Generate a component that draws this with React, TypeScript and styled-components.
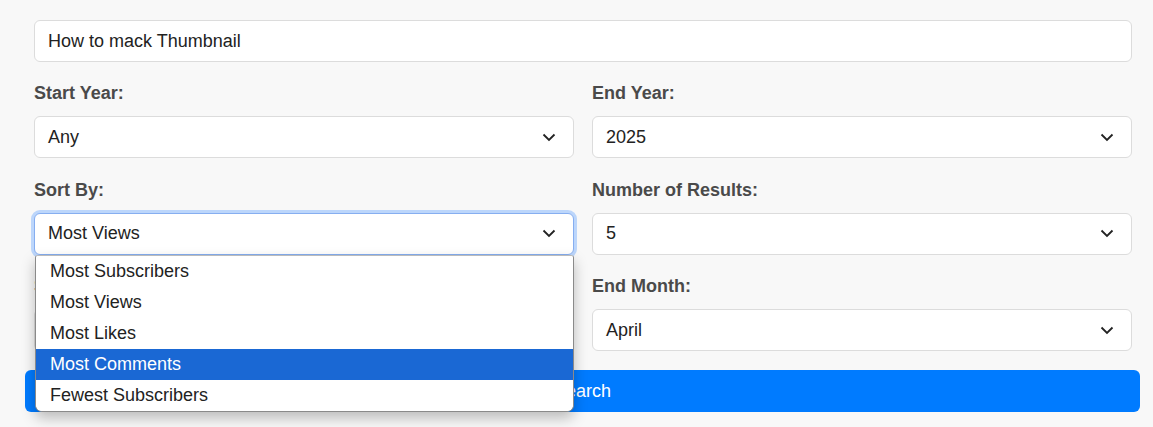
import { createGlobalStyle, styled } from "styled-components";

const GlobalStyle = createGlobalStyle`
  html, body {
    margin: 0;
    padding: 0;
    background: #f8f8f8;
  }
  body {
    font-family: "Liberation Sans", Arial, sans-serif;
    color: #222;
  }
`;

const Form = styled.form`
  width: 1115px;
  padding: 20px 0 15px 25px;
  display: flex;
  flex-direction: column;
  gap: 19px;
`;

const Fields = styled.div`
  padding: 0 8px 0 9px;
  display: flex;
  flex-direction: column;
  gap: 20px;
`;

const SearchInput = styled.div`
  height: 42px;
  box-sizing: border-box;
  background: #fff;
  border: 1px solid #dcdcdc;
  border-radius: 6px;
  padding: 0 13px;
  display: flex;
  align-items: center;
  font-size: 18px;
  color: #222;
`;

const Grid = styled.div`
  display: grid;
  grid-template-columns: 1fr 1fr;
  column-gap: 18px;
  row-gap: 20.5px;
`;

const Field = styled.div`
  position: relative;
  display: flex;
  flex-direction: column;
  gap: 12px;
`;

const Label = styled.label`
  font-size: 18px;
  line-height: 22px;
  font-weight: bold;
  color: #4a4a4a;
`;

const Select = styled.div<{ $focused?: boolean }>`
  height: 42px;
  box-sizing: border-box;
  background: #fff;
  border: 1px solid ${(p) => (p.$focused ? "#86aef0" : "#dcdcdc")};
  box-shadow: ${(p) => (p.$focused ? "0 0 0 3px #bcd6fb" : "none")};
  border-radius: 6px;
  padding: 0 17px 0 13px;
  display: flex;
  align-items: center;
  justify-content: space-between;
  font-size: 18px;
  color: #222;
`;

const Chevron = () => (
  <svg width="14" height="9" viewBox="0 0 14 9" fill="none">
    <path d="M1.5 1.5 L7 7 L12.5 1.5" stroke="#222" strokeWidth="1.8" />
  </svg>
);

const Menu = styled.ul`
  position: absolute;
  top: 100%;
  left: 1px;
  right: 0;
  margin: 0;
  padding: 0;
  list-style: none;
  background: #fff;
  border: 1px solid #8a8a8a;
  border-top-color: #bbb;
  border-radius: 3px 3px 7px 7px;
  box-shadow: 0 6px 14px rgba(0, 0, 0, 0.25);
  overflow: hidden;
  z-index: 10;
`;

const Option = styled.li<{ $active?: boolean }>`
  height: 31px;
  line-height: 30px;
  padding-left: 14px;
  font-size: 18px;
  color: ${(p) => (p.$active ? "#fff" : "#222")};
  background: ${(p) => (p.$active ? "#1a68d4" : "#fff")};
`;

const Button = styled.button`
  height: 42px;
  border: none;
  border-radius: 6px;
  background: #007bff;
  color: #fff;
  font-family: "Liberation Sans", Arial, sans-serif;
  font-size: 18px;
  cursor: pointer;
`;

const sortOptions = [
  "Most Subscribers",
  "Most Views",
  "Most Likes",
  "Most Comments",
  "Fewest Subscribers",
];

export default function App() {
  return (
    <>
      <GlobalStyle />
      <Form onSubmit={(e) => e.preventDefault()}>
        <Fields>
          <SearchInput>How to mack Thumbnail</SearchInput>
          <Grid>
            <Field>
              <Label>Start Year:</Label>
              <Select>
                Any <Chevron />
              </Select>
            </Field>
            <Field>
              <Label>End Year:</Label>
              <Select>
                2025 <Chevron />
              </Select>
            </Field>
            <Field>
              <Label>Sort By:</Label>
              <Select $focused>
                Most Views <Chevron />
              </Select>
              <Menu>
                {sortOptions.map((o) => (
                  <Option key={o} $active={o === "Most Comments"}>
                    {o}
                  </Option>
                ))}
              </Menu>
            </Field>
            <Field>
              <Label>Number of Results:</Label>
              <Select>
                5 <Chevron />
              </Select>
            </Field>
            <Field>
              <Label>Start Month:</Label>
              <Select>
                January <Chevron />
              </Select>
            </Field>
            <Field>
              <Label>End Month:</Label>
              <Select>
                April <Chevron />
              </Select>
            </Field>
          </Grid>
        </Fields>
        <Button type="submit">Search</Button>
      </Form>
    </>
  );
}
